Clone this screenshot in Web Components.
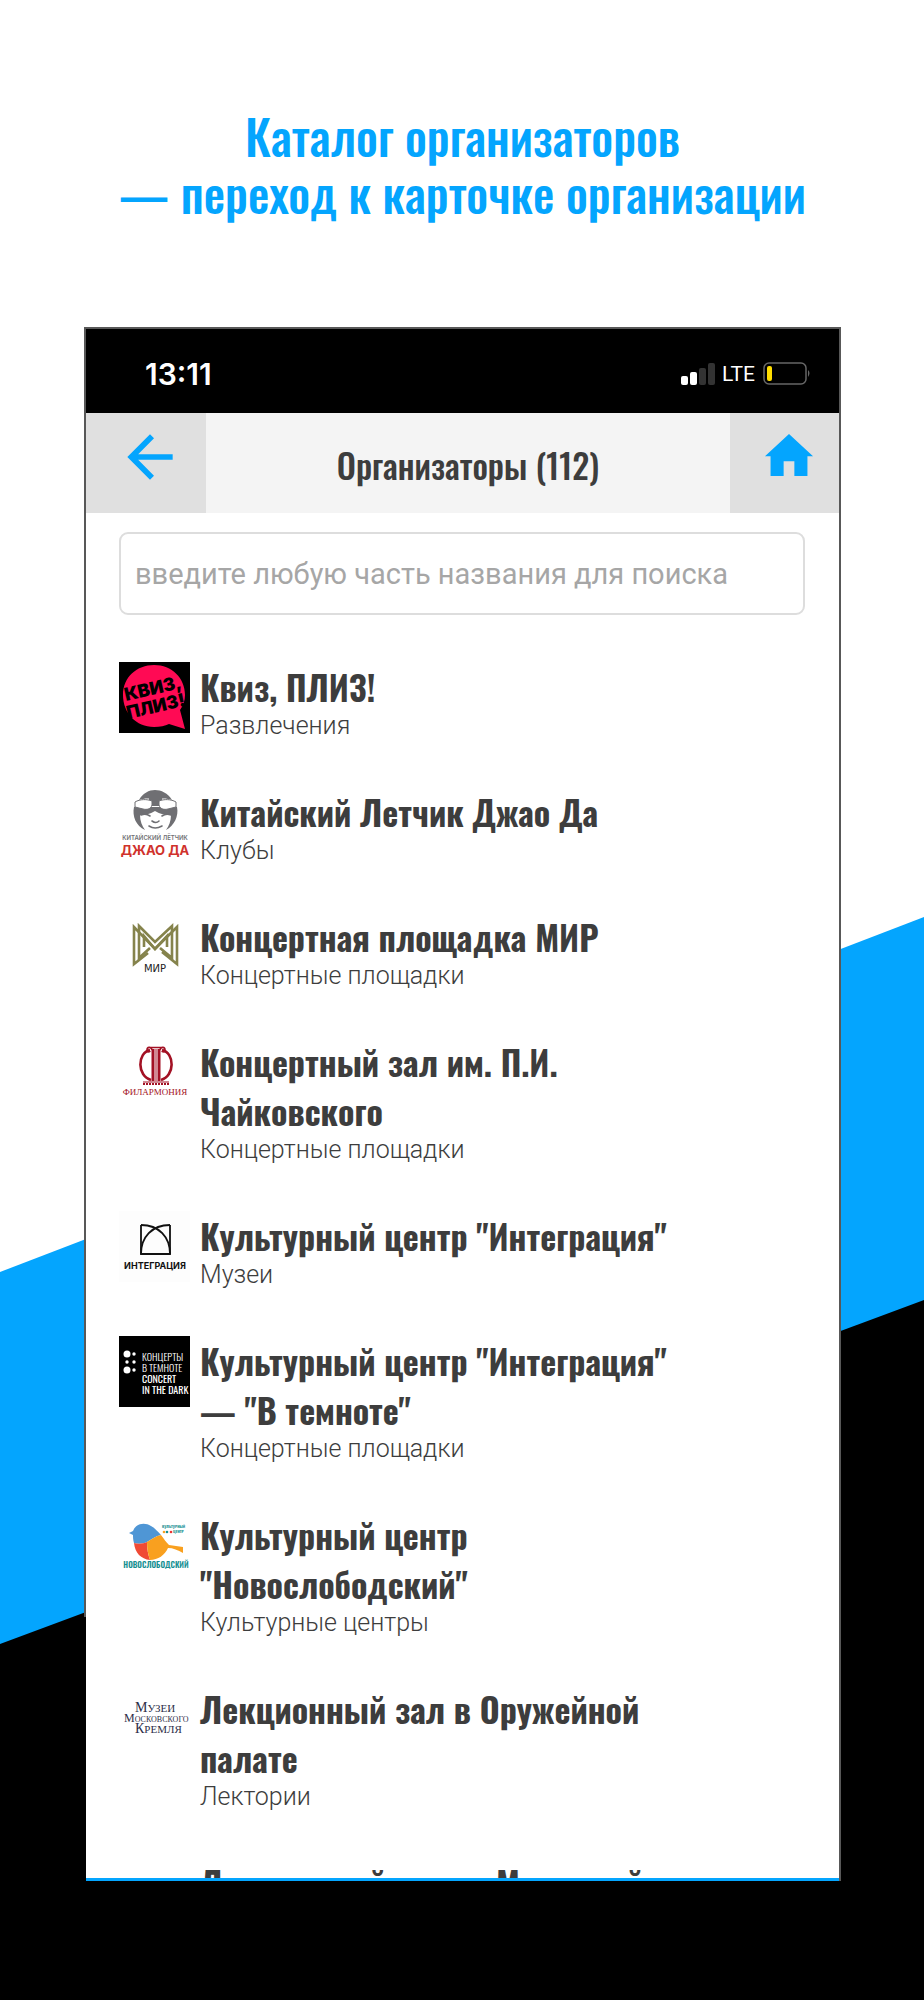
<!DOCTYPE html>
<html lang="ru">
<head>
<meta charset="utf-8">
<meta name="viewport" content="width=device-width, initial-scale=1">
<title>Каталог организаторов</title>
<style>
html, body { margin: 0; background: #fff; }
body { font-family: Roboto, "Liberation Sans", sans-serif; color: #3d3d3d; }
</style>
</head>
<body>
<promo-page>
  <span slot="title">Каталог организаторов<br>— переход к карточке организации</span>
  <phone-frame>
    <status-bar time="13:11" network="LTE"></status-bar>
    <app-header>Организаторы (112)</app-header>
    <search-field placeholder="введите любую часть названия для поиска"></search-field>
    <org-list>
      <org-item logo="quiz" category="Развлечения">Квиз, ПЛИЗ!</org-item>
      <org-item logo="pilot" category="Клубы">Китайский Летчик Джао Да</org-item>
      <org-item logo="mir" category="Концертные площадки">Концертная площадка МИР</org-item>
      <org-item logo="phil" category="Концертные площадки">Концертный зал им. П.И. Чайковского</org-item>
      <org-item logo="integ" category="Музеи">Культурный центр "Интеграция"</org-item>
      <org-item logo="dark" category="Концертные площадки">Культурный центр "Интеграция" — "В темноте"</org-item>
      <org-item logo="bird" category="Культурные центры">Культурный центр "Новослободский"</org-item>
      <org-item logo="kremlin" category="Лектории">Лекционный зал в Оружейной палате</org-item>
      <org-item logo="" category="">Лекционный зал на Манежной</org-item>
    </org-list>
  </phone-frame>
</promo-page>

<script>
const OSWALD = 'Oswald, "Roboto Condensed", sans-serif';

const LOGOS = {
  quiz: `<rect width="71" height="71"/>
    <path d="M35 3c18 0 31 13 31 30 0 6-2 11-5 15l5 19-16-5c-4 2-9 3-15 3C17 65 4 51 4 33S18 3 35 3z" fill="#ff0a54"/>
    <g font-family="Inter, sans-serif" font-weight="900" font-size="18">
      <text transform="translate(7 39) rotate(-13)">КВИЗ,</text>
      <text transform="translate(9 57) rotate(-13)">ПЛИЗ!</text>
    </g>`,
  pilot: `<path d="M20 13C24 6 30 3 36 3s13 3 17 10c-6-2-11-2-15 0h-3c-4-2-9-2-15 0z" fill="#6f6f73"/>
    <path d="M15 20h43c2 9-3 19-11 23 3-4 5-9 5-15-6 0-11-1-16-4-5 3-10 4-15 4 0 6 2 11 5 15-9-4-13-14-11-23z" fill="#6f6f73"/>
    <path d="M30 8h13v11H30z" fill="#6f6f73"/>
    <path d="M16 15c5-3 12-3 17-1v4c-1 4-5 5-9 4l-8-2zM57 15c-5-3-12-3-17-1v4c1 4 5 5 9 4l8-2z" fill="#fff" stroke="#6f6f73" stroke-width="1"/>
    <path d="M22 28q5-2 9 1M43 29q4-3 9-1M33 34q4 3 7 0M30 39q6 4 13 0" fill="none" stroke="#6f6f73" stroke-width="1.6" stroke-linecap="round"/>
    <text x="36" y="53" text-anchor="middle" font-family="Inter, sans-serif" font-weight="600" font-size="6" fill="#6f6f73">КИТАЙСКИЙ ЛЁТЧИК</text>
    <text x="36" y="68" text-anchor="middle" font-family="Inter, sans-serif" font-weight="700" font-size="13" fill="#d0322c">ДЖАО ДА</text>`,
  mir: `<g fill="none" stroke="#85834c" stroke-width="2.6">
      <path d="M29 41 L15 52 V15 L36 37 L58 15 V52 L43 40"/>
      <path d="M31 36 L20 46 V14 L36 30 L53 14 V46 L41 36"/>
      <path d="M25 35V24l11 13 12-13v11"/></g>
    <text x="36" y="60" text-anchor="middle" font-family="'DejaVu Sans', sans-serif" font-size="10" fill="#222">МИР</text>`,
  phil: `<g fill="none" stroke="#a31124">
      <path d="M31 13C18 16 18 39 32 43M43 13c13 3 13 26-1 30" stroke-width="2.6"/>
      <path d="M34 12v32M40 12v32" stroke-width="3"/><path d="M37 12v32" stroke-width="1"/>
      <path d="M33 13c-1-4-5-3-5 0s3 2 3 1M41 13c1-4 5-3 5 0s-3 2-3 1M31 10.500h12" stroke-width="1.6"/>
      <path d="M24 45h26" stroke-width="1"/><path d="M24 47h26" stroke-width="2" stroke-dasharray="2 1"/></g>
    <text x="36" y="58" text-anchor="middle" font-family="'Liberation Serif', serif" font-size="9" fill="#a31124">ФИЛАРМОНИЯ</text>`,
  integ: `<rect width="71" height="71" fill="#fdfdfd"/>
    <g fill="none" stroke="#111" stroke-width="1.8"><path d="M22 14v29h29V14"/><path d="M22 43C22 26 33 14 51 14M51 43C51 26 40 14 22 14"/></g>
    <text x="36" y="58" text-anchor="middle" font-family="Inter, sans-serif" font-weight="700" font-size="9" fill="#111">ИНТЕГРАЦИЯ</text>`,
  dark: `<rect width="71" height="71"/>
    <g fill="#fff"><circle cx="8" cy="18" r="3.500"/><circle cx="15" cy="18" r="1.700"/><circle cx="8" cy="26" r="1.700"/><circle cx="15" cy="26" r="1.700"/><circle cx="8" cy="34" r="3.500"/><circle cx="15" cy="34" r="1.700"/></g>
    <g font-family="Oswald, sans-serif" font-size="10" fill="#fff"><text x="23" y="25" font-weight="300">КОНЦЕРТЫ</text><text x="23" y="36" font-weight="300">В ТЕМНОТЕ</text><text x="23" y="47" font-weight="400">CONCERT</text><text x="23" y="58" font-weight="400">IN THE DARK</text></g>`,
  bird: `<path d="M10 23l4-2c3-8 12-9 18-5 4 2 7 6 10 9-5 1-9 4-14 7-4 2-9 2-13 1-1-3-1-6-1-8z" fill="#4f96d5"/>
    <path d="M15 33c4 1 9 1 13-1 0 7 1 12 3 18-9-1-15-7-16-17z" fill="#f04a35"/>
    <path d="M28 32c5-3 9-6 14-7 3 4 5 7 8 10l14 2v6c-5-3-10-5-15-5-3 7-10 12-18 12-2-6-3-11-3-18z" fill="#f9a01f"/>
    <g font-family="Oswald, sans-serif" font-weight="600" fill="#168f92"><text x="37" y="58" text-anchor="middle" font-size="8">НОВОСЛОБОДСКИЙ</text><text x="43" y="18" font-size="4">КУЛЬТУРНЫЙ</text><text x="54" y="23" font-size="4">ЦЕНТР</text></g>
    <circle cx="45" cy="22" r="1.300" fill="#f9a01f"/><circle cx="48" cy="22" r="1.300" fill="#168f92"/><circle cx="52" cy="22" r="1.300" fill="#e33"/>`,
  kremlin: `<g font-family="'Liberation Serif', serif" fill="#2d2d48"><text x="16" y="28" font-size="14">М<tspan font-size="11">УЗЕИ</tspan></text><text x="5" y="38" font-size="12">М<tspan font-size="8">ОСКОВСКОГО</tspan></text><text x="16" y="49" font-size="14">К<tspan font-size="11">РЕМЛЯ</tspan></text></g>`
};

class Base extends HTMLElement {
  connectedCallback() {
    if (!this.shadowRoot) this.attachShadow({ mode: 'open' }).innerHTML = this.render();
  }
}

customElements.define('promo-page', class extends Base {
  render() {
    return `<style>
      :host { display: flex; flex-direction: column; position: relative; isolation: isolate; height: 100vh; box-sizing: border-box; padding: 107px 83px 119px 84px; }
      .bg { position: absolute; inset: 0; width: 100%; height: 100%; z-index: -1; }
      h1 { margin: 0 0 106px; font: 500 48px/57px ${OSWALD}; color: #04a5fe; text-align: center; }
    </style>
    <svg class="bg" viewBox="0 0 924 2000" preserveAspectRatio="none" aria-hidden="true">
      <path d="M0 1272L924 917V2000H0z" fill="#04a5fe"/><path d="M0 1644L924 1300V2000H0z"/>
    </svg>
    <h1><slot name="title"></slot></h1><slot></slot>`;
  }
});

customElements.define('phone-frame', class extends Base {
  render() {
    return `<style>
      :host { display: flex; flex: 1; min-height: 0; flex-direction: column; padding: 2px 2px 0 2px; background: linear-gradient(90deg, transparent 50%, #585858 50%), linear-gradient(#585858 83%, #000 83%); }
      .screen { flex: 1; min-height: 0; overflow: hidden; background: #fff; border-bottom: 3px solid #04a5fe; }
    </style><div class="screen"><slot></slot></div>`;
  }
});

customElements.define('status-bar', class extends Base {
  render() {
    return `<style>
      :host { display: flex; align-items: center; height: 84px; box-sizing: border-box; padding: 6px 28px 0 59px; background: #000; color: #fff; }
      .time { flex: 1; font: 600 30px/30px Inter, sans-serif; }
      .net { font: 400 21px/24px Roboto, sans-serif; margin: 0 8px 0 7px; }
      svg { display: block; }
    </style>
    <span class="time">${this.getAttribute('time')}</span>
    <svg width="34" height="22" aria-hidden="true"><g fill="#fff"><rect y="13" width="7" height="9" rx="2"/><rect x="9" y="9" width="7" height="13" rx="2"/></g><g fill="#333"><rect x="18" y="5" width="7" height="17" rx="2"/><rect x="27" width="7" height="22" rx="2"/></g></svg>
    <span class="net">${this.getAttribute('network')}</span>
    <svg width="48" height="24" aria-hidden="true"><rect x="1" y="1" width="42" height="21" rx="5" fill="none" stroke="#666" stroke-width="1.500"/><rect x="4" y="4" width="5" height="15" rx="2" fill="#fd0"/><path d="M45 8q3 3 0 7z" fill="#666"/></svg>`;
  }
});

customElements.define('app-header', class extends Base {
  render() {
    return `<style>
      :host { display: flex; height: 100px; background: #f4f4f4; }
      button { display: flex; align-items: center; justify-content: center; border: 0; margin: 0; padding: 0 0 12px 8px; background: #e0e0e0; color: #04a5fe; cursor: pointer; }
      .back { width: 120px; } .home { width: 109px; padding-bottom: 16px; }
      h2 { flex: 1; margin: 0; padding-top: 4px; font: 500 34px/50px ${OSWALD}; text-align: center; align-self: center; }
      svg { display: block; fill: currentColor; flex: none; }
    </style>
    <button class="back" aria-label="Назад"><svg width="68" height="68" viewBox="0 0 24 24"><path d="M20 11H7.830l5.590-5.590L12 4l-8 8 8 8 1.410-1.410L7.830 13H20v-2z"/></svg></button>
    <h2><slot></slot></h2>
    <button class="home" aria-label="Домой"><svg width="56" height="56" viewBox="0 0 24 24"><path d="M9.700 21v-6.300h4.600V21h5.600v-8.500h2.400L12 3 1.700 12.500h2.400V21z"/></svg></button>`;
  }
});

customElements.define('search-field', class extends Base {
  render() {
    const t = this.getAttribute('placeholder');
    return `<style>
      :host { display: block; padding: 19px 34px 0 33px; }
      input { display: block; width: 100%; height: 83px; box-sizing: border-box; border: 2px solid #ddd; border-radius: 9px; padding: 0 14px; background: #fff; font: 400 29px/34px Roboto, sans-serif; color: #3d3d3d; outline: 0; }
      input::placeholder { color: #a6a6a6; opacity: 1; }
    </style><input type="search" placeholder="${t}" aria-label="${t}">`;
  }
});

customElements.define('org-list', class extends Base {
  render() {
    return `<style>:host { display: flex; flex-direction: column; gap: 47px; padding: 47px 33px 0; }</style><slot></slot>`;
  }
});

customElements.define('org-item', class extends Base {
  render() {
    return `<style>
      :host { display: flex; gap: 10px; }
      svg { display: block; flex: none; width: 71px; height: 71px; }
      .text { flex: 1; max-width: 484px; }
      h3 { margin: 0; font: 700 34px/49px ${OSWALD}; }
      p { margin: 0; font: 300 25px/29px Roboto, sans-serif; }
    </style>
    <svg viewBox="0 0 71 71" aria-hidden="true">${LOGOS[this.getAttribute('logo')] || ''}</svg>
    <div class="text"><h3><slot></slot></h3><p>${this.getAttribute('category')}</p></div>`;
  }
});
</script>
</body>
</html>
